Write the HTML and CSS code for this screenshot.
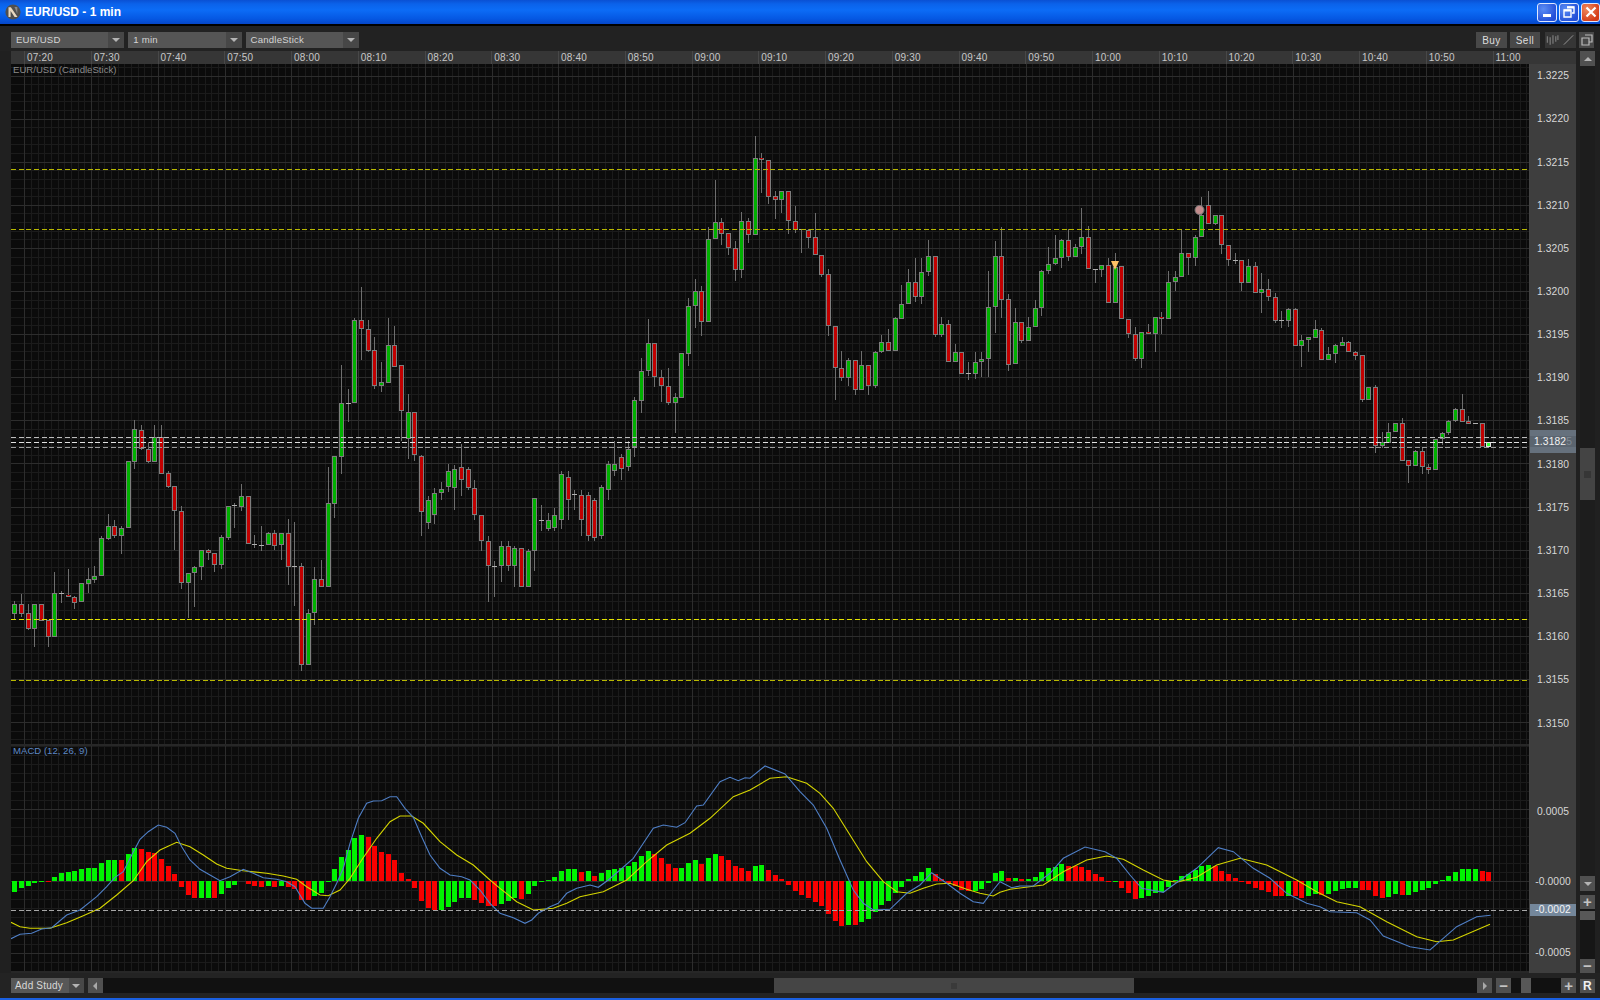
FILE: index.html
```html
<!DOCTYPE html>
<html lang="en">
<head>
<meta charset="utf-8">
<title>EUR/USD - 1 min</title>
<link rel="stylesheet" href="styles.css">
</head>
<body>
<div class="app">
  <header class="titlebar">
    <svg class="logo" viewBox="0 0 16 16" aria-hidden="true">
      <circle cx="8" cy="8" r="7.6" fill="#4f4f4f"/>
      <path d="M3.5 13V3.200h2.400L12.500 13H9.600L5.600 7v6z" fill="#e8d8c0"/>
      <path d="M9.500 3h2.800v7z" fill="#8a8a8a"/>
    </svg>
    <span class="title-text">EUR/USD - 1 min</span>
    <div class="win-buttons">
      <button class="win-btn"><span class="win-min"></span></button>
      <button class="win-btn">
        <svg class="win-icon" viewBox="0 0 12 12"><path d="M4 1h7v6H9M1 4h7v7H1z" fill="none" stroke="#fff" stroke-width="1.4"/><path d="M4 1.500h7M1 4.500h7" stroke="#fff" stroke-width="2"/></svg>
      </button>
      <button class="win-btn win-close">
        <svg class="win-icon" viewBox="0 0 12 12"><path d="M1.500 1.500l9 9M10.500 1.500l-9 9" stroke="#fff" stroke-width="2.200"/></svg>
      </button>
    </div>
  </header>

  <div class="toolbar">
    <div class="select"><span class="select-label">EUR/USD</span><span class="select-arrow"><i class="tri-down"></i></span></div>
    <div class="select"><span class="select-label">1 min</span><span class="select-arrow"><i class="tri-down"></i></span></div>
    <div class="select"><span class="select-label">CandleStick</span><span class="select-arrow"><i class="tri-down"></i></span></div>
    <div class="toolbar-right">
      <button class="tbtn tbtn-buy">Buy</button>
      <button class="tbtn tbtn-sell">Sell</button>
      <div class="tool-group">
        <svg class="tool-icon" viewBox="0 0 14 12"><path d="M1.500 2v7M4.500 3v8M7.500 1v9M10.500 2v6M12.800 1v5" stroke="#777" stroke-width="1.400"/></svg>
        <svg class="tool-icon" viewBox="0 0 14 12"><path d="M2 11L12 1" stroke="#999" stroke-width="1"/></svg>
      </div>
      <button class="tbtn-copy">
        <svg class="copy-icon" viewBox="0 0 12 12"><path d="M4 1h7v7H8M1 4h7v7H1z" fill="none" stroke="#bbb" stroke-width="1.200"/></svg>
      </button>
    </div>
  </div>

  <div class="main">
    <div class="chart-col">
      <div class="time-axis" id="timeAxis"></div>
      <div class="chart-row">
        <div class="plot">
          <svg id="chart" class="chart-svg" viewBox="11 64 1518 909"></svg>
          <span class="plot-label">EUR/USD (CandleStick)</span>
          <span class="plot-label plot-label-macd">MACD (12, 26, 9)</span>
        </div>
        <div class="price-axis">
          <div class="prices" id="prices"></div>
          <div class="tag tag-back tag-a"></div>
          <div class="tag tag-back tag-b"></div>
          <div class="tag tag-current">1.3182<span class="tag-dim">5</span></div>
          <div class="prices-macd">
            <span>0.0005</span>
            <span>-0.0000</span>
            <span>-0.0005</span>
          </div>
          <div class="tag tag-macd">-0.0002</div>
        </div>
      </div>
    </div>
    <div class="vscroll">
      <button class="sbtn"><i class="tri-up"></i></button>
      <div class="vtrack"><div class="vthumb"><i class="grip"></i></div></div>
      <button class="sbtn"><i class="tri-down"></i></button>
      <button class="sbtn sbtn-plus">+</button>
      <div class="ztrack"><div class="zthumb"></div></div>
      <button class="sbtn sbtn-text">&minus;</button>
    </div>
  </div>

  <footer class="bottombar">
    <div class="study"><span class="study-label">Add Study</span><span class="study-arrow"><i class="tri-down"></i></span></div>
    <button class="sbtn sbtn-h"><i class="tri-left"></i></button>
    <div class="htrack"><div class="hthumb"><i class="grip grip-h"></i></div></div>
    <button class="sbtn sbtn-h"><i class="tri-right"></i></button>
    <button class="sbtn sbtn-h sbtn-text sbtn-gap">&minus;</button>
    <div class="ztrack-h"><div class="zthumb-h"></div></div>
    <button class="sbtn sbtn-h sbtn-text">+</button>
    <button class="rbtn">R</button>
  </footer>
</div>
<script src="app.js"></script>
</body>
</html>
```
FILE: styles.css
```css
* { box-sizing: border-box; }
html, body { margin: 0; padding: 0; }
body {
  width: 1600px;
  height: 1000px;
  overflow: hidden;
  background: #202020;
  font-family: "Liberation Sans", Arial, sans-serif;
  font-size: 10px;
  letter-spacing: .2px;
  color: #ccc;
}
button { font: inherit; letter-spacing: inherit; border: 0; padding: 0; color: inherit; }
.app {
  width: 1600px;
  height: 1000px;
  display: flex;
  flex-direction: column;
  border-bottom: 2px solid #1a5fe0;
}

/* title bar */
.titlebar {
  height: 26px;
  flex: none;
  display: flex;
  align-items: center;
  padding: 0 0 2px 5px;
  background: linear-gradient(#0a50d4 0, #0b62ea 4px, #0c6cf6 10px, #0557e2 19px, #0646c8 24px, #000 24px);
}
.logo { width: 16px; height: 16px; flex: none; }
.title-text { margin-left: 4px; color: #fff; font-size: 12px; font-weight: bold; letter-spacing: 0; }
.win-buttons { margin-left: auto; display: flex; gap: 2px; }
.win-btn {
  width: 20px;
  height: 19px;
  border: 1px solid #dfe8ff;
  border-radius: 3px;
  background: radial-gradient(circle at 30% 30%, #5a8cf4, #2450d8 75%);
  display: flex;
  align-items: center;
  justify-content: center;
  position: relative;
}
.win-close { width: 19px; background: radial-gradient(circle at 30% 30%, #f08a60, #d43c18 75%); }
.win-min { width: 8px; height: 3px; background: #fff; margin-top: 7px; }
.win-icon { width: 12px; height: 12px; }

/* toolbar */
.toolbar {
  height: 25px;
  flex: none;
  display: flex;
  align-items: flex-start;
  gap: 4px;
  padding: 6px 5px 0 11px;
  background: #222;
}
.select { width: 113.300px; height: 16px; display: flex; background: #555; }
.select-label { flex: 1; padding-left: 5px; line-height: 16px; font-size: 9.600px; color: #d4d4d4; letter-spacing: .2px; }
.select-arrow { width: 16px; background: #474747; display: flex; align-items: center; justify-content: center; }
.toolbar-right { margin-left: auto; display: flex; }
.tbtn { width: 31px; height: 16px; background: #484848; color: #ddd; letter-spacing: .5px; }
.tbtn-sell { width: 30px; margin-left: 3px; }
.tool-group { width: 31px; height: 16px; margin-left: 5px; background: #363636; display: flex; align-items: center; justify-content: space-around; }
.tool-icon { width: 13px; height: 12px; }
.tbtn-copy { width: 15px; height: 16px; margin-left: 3px; margin-right: 1px; background: #484848; display: flex; align-items: center; justify-content: center; }
.copy-icon { width: 12px; height: 12px; }

i { display: block; }
.tri-down { width: 0; height: 0; border-left: 4px solid transparent; border-right: 4px solid transparent; border-top: 4px solid #b4b4b4; }
.tri-up { width: 0; height: 0; border-left: 4px solid transparent; border-right: 4px solid transparent; border-bottom: 4px solid #b4b4b4; }
.tri-left { width: 0; height: 0; border-top: 4px solid transparent; border-bottom: 4px solid transparent; border-right: 4px solid #a8a8a8; }
.tri-right { width: 0; height: 0; border-top: 4px solid transparent; border-bottom: 4px solid transparent; border-left: 4px solid #a8a8a8; }

/* main */
.main { flex: 1; display: flex; min-height: 0; }
.chart-col { width: 1565px; margin-left: 11px; flex: none; display: flex; flex-direction: column; }
.time-axis { height: 13px; flex: none; display: flex; padding-left: 13px; background: #363636; }
.time-cell { width: 66.750px; flex: none; border-left: 1px solid #484848; padding-left: 2px; line-height: 13px; color: #c8c8c8; }
.chart-row { flex: 1; display: flex; height: 909px; }
.plot { width: 1518px; height: 909px; position: relative; flex: none; background: #0b0b0b; }
.chart-svg { display: block; width: 1518px; height: 909px; }
.plot-label { position: absolute; left: 2px; top: 0; color: #8a8a8a; font-size: 9.600px; letter-spacing: 0; line-height: 12px; }
.plot-label-macd { top: 681px; color: #5d88c6; }

.g-minor { stroke: #1b1b1b; stroke-width: 1; shape-rendering: crispEdges; }
.g-major { stroke: #2d2d2d; stroke-width: 1; shape-rendering: crispEdges; }
.g-split { stroke: #272727; stroke-width: 2; shape-rendering: crispEdges; }
.wick { fill: #6e6e6e; }
.b-edge { fill: #7d7d7d; }
.b-up { fill: #00b000; }
.b-down { fill: #c20000; }
.b-last { fill: #33ff33; }
.b-last-edge { fill: #e0e0e0; }
.doji { fill: #b0b0b0; }
.h-up { fill: #00f400; }
.h-down { fill: #f80000; }
.l-blue { fill: none; stroke: #4f7fc6; stroke-width: 1.100; }
.l-yellow { fill: none; stroke: #d6d600; stroke-width: 1.100; }
.dash { stroke-width: 1.300; stroke-dasharray: 5 2.670; shape-rendering: crispEdges; }
.d-y1 { stroke: #b8b800; }
.d-y2 { stroke: #e4e400; }
.d-w1 { stroke: #bdbdbd; }
.d-w2 { stroke: #e0e0e0; }
.d-w3 { stroke: #9c9c9c; }
.d-m { stroke: #a8a8a8; }
.m-circle { fill: #c28c8c; stroke: #777; stroke-width: 1; }
.m-tri { fill: #ffc266; }

/* price axis */
.price-axis { width: 47px; height: 909px; flex: none; position: relative; background: #3e3e3e; display: flex; flex-direction: column; border-left: 1px solid #444; font-size: 10.300px; color: #d8d8d8; letter-spacing: .1px; }
.prices { height: 681px; flex: none; display: flex; flex-direction: column; gap: 29.160px; padding-top: 5.200px; text-align: center; }
.prices span { height: 14px; line-height: 14px; display: block; }
.prices-macd { flex: 1; display: flex; flex-direction: column; gap: 56.400px; padding-top: 60px; text-align: center; }
.prices-macd span { height: 14px; line-height: 14px; }
.tag { position: absolute; left: 0; width: 46px; text-align: center; overflow: hidden; }
.tag-back { background: #66717d; height: 8px; }
.tag-a { top: 366px; }
.tag-b { top: 381px; }
.tag-current { top: 372px; height: 11px; line-height: 11px; background: #5b6570; color: #f2f2f2; }
.tag-dim { color: #808a94; }
.tag-macd { top: 840px; height: 12px; line-height: 12px; background: #74879b; color: #f4f4f4; }

/* scrollbars */
.vscroll { width: 15px; margin-left: 4px; flex: none; display: flex; flex-direction: column; }
.sbtn { width: 15px; height: 15px; flex: none; background: #505050; display: flex; align-items: center; justify-content: center; color: #c4c4c4; font-size: 15px; font-weight: bold; line-height: 14px; letter-spacing: 0; }
.sbtn-plus { margin-top: 4px; height: 14px; }
.sbtn-text { height: 14px; }
.vtrack { flex: 1; background: #1d1d1d; padding-top: 382px; }
.vthumb { height: 52px; background: #444; display: flex; align-items: center; justify-content: center; }
.grip { width: 7px; height: 7px; background: #363636; }
.ztrack { height: 50px; flex: none; background: #161616; padding-top: 2px; }
.zthumb { height: 9px; background: #585858; }

.bottombar { height: 25px; flex: none; display: flex; align-items: flex-start; padding: 5px 5px 0 11px; background: #232323; }
.study { width: 73px; height: 15px; display: flex; background: #575757; }
.study-label { flex: 1; line-height: 15px; padding-left: 4px; color: #d8d8d8; letter-spacing: .2px; }
.study-arrow { width: 15px; background: #484848; display: flex; align-items: center; justify-content: center; }
.sbtn-h { width: 15px; height: 15px; }
.study + .sbtn-h { margin-left: 4px; }
.htrack { width: 1375px; height: 15px; background: #111; padding-left: 671px; }
.hthumb { width: 360px; height: 15px; background: #454545; display: flex; align-items: center; justify-content: center; }
.grip-h { width: 6px; height: 6px; background: #3a3a3a; }
.sbtn-gap { margin-left: 4px; }
.ztrack-h { width: 50px; height: 15px; background: #111; padding-left: 10px; }
.zthumb-h { width: 10px; height: 15px; background: #575757; }
.rbtn { width: 15px; height: 14px; margin-left: 4px; margin-top: 1px; background: #505050; color: #f0f0f0; font-weight: bold; font-size: 12px; line-height: 14px; }
```
FILE: app.js
```js
(function () {
  var NS = 'http://www.w3.org/2000/svg';
  var svg = document.getElementById('chart');

  function el(name, attrs) {
    var e = document.createElementNS(NS, name);
    for (var k in attrs) e.setAttribute(k, attrs[k]);
    svg.appendChild(e);
    return e;
  }
  function line(x1, y1, x2, y2, cls) { el('line', { x1: x1, y1: y1, x2: x2, y2: y2, 'class': cls }); }
  function rect(x, y, w, h, cls) { el('rect', { x: x, y: y, width: w, height: h, 'class': cls }); }

  /* axes */
  var times = ['07:20','07:30','07:40','07:50','08:00','08:10','08:20','08:30','08:40','08:50','09:00','09:10','09:20','09:30','09:40','09:50','10:00','10:10','10:20','10:30','10:40','10:50','11:00'];
  var ta = document.getElementById('timeAxis');
  times.forEach(function (t) {
    var c = document.createElement('span');
    c.className = 'time-cell';
    c.textContent = t;
    ta.appendChild(c);
  });
  var pr = document.getElementById('prices');
  for (var p = 13225; p >= 13150; p -= 5) {
    var s = document.createElement('span');
    s.textContent = (p / 10000).toFixed(4);
    pr.appendChild(s);
  }

  /* grid */
  var i, y, x;
  for (i = 0; i < 228; i++) {
    x = Math.round(24.3 + 6.675 * i) + 0.5;
    if (i % 10) line(x, 64, x, 973, 'g-minor');
  }
  for (i = -1; i * 8.62 + 75.5 < 745; i++) {
    y = Math.round(75.5 + 8.62 * i) + 0.5;
    if (i % 5) line(11, y, 1529, y, 'g-minor');
  }
  for (i = -15; i * 8.97 + 881 < 973; i++) {
    y = Math.round(881 + 8.97 * i) + 0.5;
    if (i % 8) line(11, y, 1529, y, 'g-minor');
  }
  for (i = 0; i < 23; i++) {
    x = Math.round(24.3 + 66.75 * i) + 0.5;
    line(x, 64, x, 973, 'g-major');
  }
  for (i = 0; i < 16; i++) {
    y = Math.round(75.5 + 43.1 * i) + 0.5;
    line(11, y, 1529, y, 'g-major');
  }
  [809, 881, 953].forEach(function (v) { line(11, v + 0.5, 1529, v + 0.5, 'g-major'); });
  line(11, 745, 1529, 745, 'g-split');
  line(11, 972, 1529, 972, 'g-split');

  function cx(n) { return 14.67 + 6.67 * n; }

  /* MACD histogram: [colour, height in 3x px; + is above the zero line] */
  var hist = 'G-33 G-22 G-16 G-5 G-1 R-1 G12 G24 G27 G30 G35 G38 G40 G55 G64 G64 R64 G82 G98 R95 R88 R84 R65 R44 R22 R-19 R-42 R-50 G-50 G-50 R-50 G-40 G-22 G-11 G0 R-8 R-14 R-17 G-14 R-18 G-14 R-18 R-25 R-56 R-56 G-44 G-36 G-1 G36 G72 G93 G128 G138 R132 R106 R88 R82 R64 R24 R6 R-22 R-60 R-80 R-86 G-86 G-78 G-64 G-52 G-50 R-56 R-65 R-74 R-76 ' +
    'G-68 G-60 G-50 R-54 G-38 G-14 G-2 G2 G12 G30 G36 G36 R26 G30 R16 G24 G33 G36 G40 G44 G58 G76 G90 R82 R70 R52 R38 G40 G54 G64 R52 G70 G82 R76 R64 R44 R40 R30 G44 G47 R33 R18 R6 R-13 R-30 R-42 R-50 R-62 R-76 R-98 R-120 R-136 G-132 R-132 G-122 G-113 G-92 G-73 G-60 G-36 G-17 G6 G15 G26 G38 R20 R6 R-8 R-14 R-26 R-30 G-30 G-24 G-5 G24 ' +
    'G30 R10 G10 R6 G6 G12 G27 G38 G42 G52 R46 R44 R42 R32 R20 R12 R-4 G-4 R-22 R-36 R-54 G-50 G-44 G-36 G-32 G-18 G4 G14 G20 G32 G46 G48 R44 R30 R20 R10 R-3 R-10 R-22 R-28 R-32 R-44 R-45 G-44 R-46 R-50 G-45 G-38 R-42 G-38 G-30 G-25 G-22 G-20 R-28 R-28 R-45 R-50 G-47 G-40 R-42 G-42 G-32 G-28 G-22 G-10 G1 G16 G28 G35 G35 G35 R29 R27';
  hist.split(' ').forEach(function (tok, n) {
    var v = parseFloat(tok.slice(1)) / 3;
    if (v === 0) return;
    var h = Math.max(1, Math.round(Math.abs(v)));
    var bx = Math.round(cx(n) - 2.5);
    rect(bx, v > 0 ? 881 - h : 881, 5, h, tok[0] === 'G' ? 'h-up' : 'h-down');
  });

  /* MACD lines, each segment read at its own crop offset */
  function pts(ox, oy, arr) {
    var out = [];
    for (var k = 0; k < arr.length; k += 2) out.push((ox + arr[k] / 3).toFixed(1) + ',' + (oy + arr[k + 1] / 3).toFixed(1));
    return out;
  }
  var blue = pts(0, 740, [33,596,60,583,95,580,125,567,155,563,200,525,240,510,290,470,320,440,345,412,370,395,395,345,420,298,445,275,475,255,500,262,525,280,545,320,570,360,600,388,630,405,660,422,690,410,730,388,760,400,790,413,830,418,860,425,885,440,900,465,915,490,935,505,970,505,990,470,1010,430,1030,385,1050,310,1075,235,1100,190,1120,183,1145,182,1170,170,1190,170,1215,205,1240,232,1265,290,1290,345,1320,385,1350,405,1385,410,1410,420,1440,450,1470,490])
    .concat(pts(500, 740, [0,520,40,533,75,550,95,540,115,520,150,500,175,490,200,460,230,445,270,435,295,442,325,420,360,390,400,355,430,310,460,265,490,255,530,262,555,248,590,198,610,195,660,125,690,112,715,122,735,113,750,115,795,78,855,102,900,155,940,195,980,265,1020,360,1060,450,1090,490,1120,510,1170,508,1220,460,1260,435,1295,398,1340,430,1380,460,1420,485,1450,490,1480,450]))
    .concat(pts(1000, 800, [0,245,35,263,60,258,100,258,150,220,190,175,255,141,315,155,350,175,390,225,425,265,490,277,520,255,590,205,655,143,700,155,760,205,810,235,860,280,920,310,960,320,990,335,1070,338,1110,360,1150,408,1230,440,1290,450,1370,380,1430,350,1472,346]));
  var yellow = pts(0, 740, [33,547,60,560,90,565,150,565,200,548,250,527,300,505,350,465,400,422,440,365,480,330,530,307,570,320,610,345,650,372,680,385,730,392,800,400,850,408,890,418,920,440,960,465,985,467,1020,450,1050,415,1085,360,1130,295,1170,245,1200,228,1235,228,1270,250,1320,305,1370,345,1420,375,1470,420])
    .concat(pts(500, 740, [0,445,50,485,100,510,160,505,200,490,240,470,310,455,380,420,440,365,500,315,570,280,630,235,700,170,750,150,810,115,860,110,920,130,960,160,1000,205,1050,285,1100,365,1150,425,1190,455,1230,460,1270,445,1310,432,1350,430,1400,448,1440,460,1480,468]))
    .concat(pts(1000, 800, [0,277,30,268,130,255,190,215,260,180,320,168,370,178,430,210,490,240,530,247,590,232,650,195,720,175,800,195,890,240,950,275,1010,305,1080,320,1160,365,1250,410,1310,425,1360,420,1470,373]));
  el('polyline', { points: yellow.join(' '), 'class': 'l-yellow' });
  el('polyline', { points: blue.join(' '), 'class': 'l-blue' });

  /* candles: colour (G/R/D), high, body top, body bottom, low. Units differ per block. */
  var blocks = [
    { f: function (v) { return 400 + v / 3; }, c: [
      'G 603 612 642 658','R 583 612 642 650','R 612 640 688 690','G 612 612 688 740','R 612 612 662 662','R 660 660 710 740','G 517 580 710 710','D 573 580 582 608','R 508 584 590 590','R 588 590 608 628',
      'G 550 550 607 607','G 503 538 551 578','G 498 527 539 548','G 408 415 527 527','G 343 378 416 420','R 360 378 408 413','G 378 384 408 462','G 183 183 384 384','G 60 88 185 208','R 75 90 148 150',
      'R 125 147 186 190','G 75 112 186 186','R 75 112 222 222','R 212 220 260 265','R 258 258 333 450','R 318 333 548 568','G 518 518 548 655','G 498 500 518 622','G 450 450 502 540','R 448 450 458 480',
      'R 458 458 494 517','G 405 412 494 508','G 318 318 414 420','D 308 316 318 383','G 252 289 320 332','R 289 289 433 433','D 405 433 436 443','D 378 434 437 452','G 397 398 436 436','R 391 398 437 450',
      'G 398 398 436 480','R 358 398 502 555','D 366 498 500 618','R 490 498 796 814','G 628 638 796 796','G 500 538 638 675','R 480 538 562 562','G 200 310 562 562','G 168 168 311 354'] },
    { f: function (v) { return 120 + v / 3; }, c: [
      'G 735 850 1010 1062','D 806 850 853 905','G 595 600 850 850','R 500 600 627 720','R 600 627 693 695','R 650 690 797 808','G 727 786 797 816','G 595 675 788 788','R 617 676 740 740'] },
    { f: function (v) { return v * 1.0204; }, c: [
      'R 358 358 403 432','G 386 404 430 450','R 404 404 446 452','R 446 447 502 525','G 486 490 513 518','G 478 483 505 514','G 472 479 483 490','G 455 462 477 482','G 456 460 478 500','R 435 458 470 486',
      'R 458 460 478 480','R 470 478 505 510','R 505 505 530 540','R 525 530 555 590','D 550 555 556 585','G 530 535 555 570','R 530 535 555 560','G 535 537 555 575','R 537 537 575 575','G 538 540 575 575',
      'G 488 488 540 560','D 495 510 511 520','G 503 510 518 520','G 498 505 517 520','G 462 465 510 518','R 462 467 490 510','D 480 484 487 500','R 480 485 510 525','R 482 485 525 530','R 488 490 527 530',
      'G 475 477 525 528','G 452 455 480 490','G 432 455 462 466','R 445 448 460 470','G 432 440 458 462'] },
    { f: function (v) { return 120 + v / 3; }, c: [
      'G 832 840 981 1010','G 715 752 842 880','G 598 670 752 768','R 670 670 770 800','R 750 770 798 845','R 743 798 850 855','G 820 832 850 940','G 700 700 833 833','G 535 558 702 737','G 478 513 558 625',
      'R 498 513 607 648','G 320 358 607 607','G 180 307 358 358','R 295 307 342 375','R 340 340 385 405','R 363 384 450 482','G 275 304 450 473','R 295 304 344 368','G 48 115 344 344','R 100 115 121 220',
      'R 121 121 230 252','R 213 229 239 297','G 214 214 239 280','R 214 214 302 342','R 258 302 330 338','D 327 327 329 400','R 327 330 353 385','R 280 352 405 405','R 404 404 465 470','R 448 463 619 648',
      'R 619 619 745 840','R 692 744 774 782','G 715 720 774 797',
      'R 720 720 810 825','G 692 735 810 810','R 735 735 797 825','G 692 697 797 805','G 645 667 697 700','R 627 667 693 693','G 590 595 693 693','G 495 553 596 596','G 448 487 553 553','R 415 487 530 545',
      'G 415 455 530 553','G 360 408 455 467','R 408 408 645 650','G 590 613 645 650','R 600 613 725 725','G 672 695 725 725','R 695 695 762 762','D 725 760 762 780','G 695 725 762 778','G 695 717 725 770',
      'G 452 560 718 770','G 363 408 562 640','R 322 408 540 595','R 523 538 735 752','G 564 607 733 733','R 607 607 662 668','G 592 622 662 662','G 541 563 622 622','G 450 452 565 588','G 380 433 452 462',
      'G 345 415 433 435','G 358 360 415 443','R 328 361 410 422','G 372 381 410 410','G 265 352 381 402','R 318 352 447 447','D 447 447 450 488','G 435 435 450 472','R 415 435 550 550','G 400 440 550 550',
      'R 438 438 596 596','R 596 596 642 653','R 620 641 717 722','G 635 635 717 745','R 612 635 641 641','G 592 592 641 695','R 575 592 598 642','G 452 487 598 598','G 452 472 487 512','G 330 400 472 472',
      'R 400 400 415 465','G 345 352 415 437','G 232 285 352 352','R 213 254 311 311','G 284 286 311 316','R 286 286 376 402','R 376 376 421 437','D 400 421 423 432','R 420 420 490 513','G 418 438 490 490',
      'R 427 438 518 520','G 460 506 518 580','R 477 506 530 542','R 520 530 602 608','D 572 600 602 625','G 565 567 602 620','R 565 567 677 677','G 645 661 677 740','G 650 652 661 697','G 600 628 653 653',
      'R 625 629 719 719','G 680 703 719 719','G 672 676 703 728','G 652 667 677 677','R 662 667 697 697','R 692 695 707 720','R 706 706 840 845','G 800 801 840 840','R 796 801 978 998','G 937 966 978 985',
      'G 908 935 968 968','G 908 910 936 936','R 895 910 1022 1022','R 1020 1021 1037 1088','G 990 992 1037 1037','R 980 992 1042 1062','R 1032 1040 1050 1062','G 958 958 1050 1050','G 935 938 958 975','G 900 903 938 945',
      'G 865 867 903 905','R 823 867 905 905','R 888 903 911 912','D 909 909 911 911','R 910 910 981 981','L 965 965 981 981'] }
  ];

  var idx = 0;
  blocks.forEach(function (b) {
    b.c.forEach(function (row) {
      var t = row.split(' ');
      var hi = Math.round(b.f(+t[1])), top = Math.round(b.f(+t[2])), bot = Math.round(b.f(+t[3])), lo = Math.round(b.f(+t[4]));
      var bx = Math.round(cx(idx) - 2.5);
      if (lo > hi) rect(bx + 2, hi, 1, lo - hi, 'wick');
      if (t[0] === 'D') {
        rect(bx, top, 5, 1, 'doji');
      } else {
        var h = Math.max(2, bot - top);
        rect(bx, top, 5, h, t[0] === 'L' ? 'b-last-edge' : 'b-edge');
        if (h > 2) rect(bx + 1, top + 1, 3, h - 2, t[0] === 'G' ? 'b-up' : t[0] === 'R' ? 'b-down' : 'b-last');
        else rect(bx + 1, top, 3, 1, t[0] === 'G' ? 'b-up' : 'b-down');
      }
      idx++;
    });
  });

  /* horizontal levels */
  [[169, 'd-y1'], [229, 'd-y1'], [619, 'd-y2'], [680, 'd-y1'], [437, 'd-w1'], [442, 'd-w2'], [447, 'd-w3'], [910, 'd-m']].forEach(function (d) {
    line(11, d[0] + 0.5, 1529, d[0] + 0.5, 'dash ' + d[1]);
  });

  /* markers */
  el('circle', { cx: 1199.5, cy: 210, r: 4.5, 'class': 'm-circle' });
  el('polygon', { points: '1111,261 1119,261 1115,270', 'class': 'm-tri' });
})();
```
